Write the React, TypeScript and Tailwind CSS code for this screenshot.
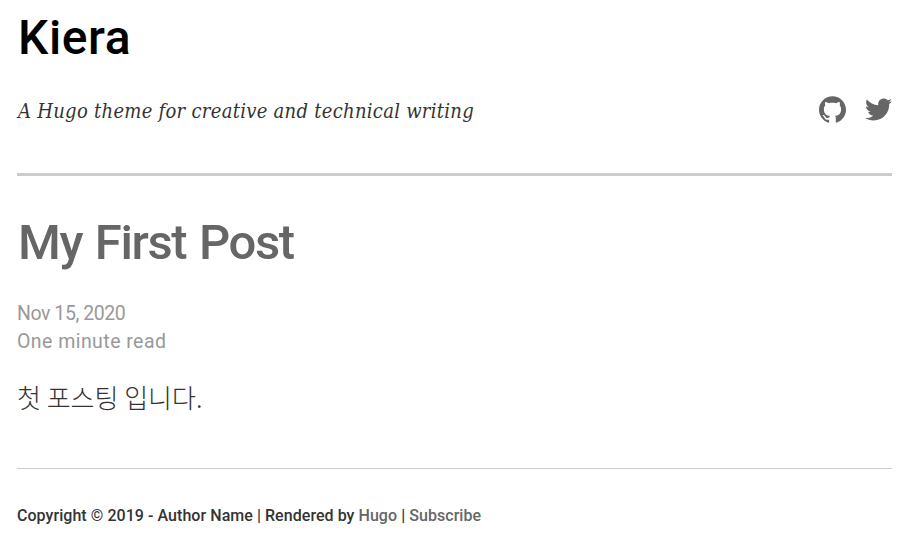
import { SiGithub } from "react-icons/si";
import { FaTwitter } from "react-icons/fa";

export default function App() {
  return (
    <div className="h-[537px] overflow-hidden bg-white pr-4 pl-[17px] font-['Roboto',sans-serif] text-[#333]">
      <header className="border-b-[3px] border-[#ccc] pb-[44px]">
        <h1 className="pt-[8px] pl-px text-[48px] leading-[60px] font-medium tracking-[0.6px] text-black">
          <a href="#" className="inline-block">Kiera</a>
        </h1>
        <div className="mt-[23px] flex h-[38px] items-center justify-between">
          <p className="pt-px pl-px font-['DejaVu_Serif_Condensed','DejaVu_Serif',serif] text-[20px] leading-[38px] tracking-[0.28px] italic">
            A Hugo theme for creative and technical writing
          </p>
          <nav className="flex items-center gap-[19px] pb-px text-[#666]">
            <a href="#" aria-label="GitHub"><SiGithub className="size-[27px]" /></a>
            <a href="#" aria-label="Twitter"><FaTwitter className="size-[27px]" /></a>
          </nav>
        </div>
      </header>
      <main className="border-b border-[#ccc] pb-[51px]">
        <h1 className="pt-[37px] pl-px text-[49px] leading-[60px] font-medium tracking-[-1.4px] [word-spacing:2px] text-[#666]">
          <a href="#">My First Post</a>
        </h1>
        <div className="mt-[27px] text-[19.5px] leading-[28px] text-[#999]">
          <p className="tracking-[-0.45px]">Nov 15, 2020</p>
          <p className="tracking-[0.45px]">One minute read</p>
        </div>
        <p className="mt-[21px] font-['Noto_Sans_CJK_KR',sans-serif] text-[26px] leading-[40px] font-light">첫 포스팅 입니다.</p>
      </main>
      <footer className="pt-[35px] text-[16px] leading-[24px] font-medium tracking-[0.05px]">
        Copyright © 2019 - Author Name | Rendered by <a href="#" className="text-[#666]">Hugo</a> | <a href="#" className="text-[#666]">Subscribe</a>
      </footer>
    </div>
  );
}
